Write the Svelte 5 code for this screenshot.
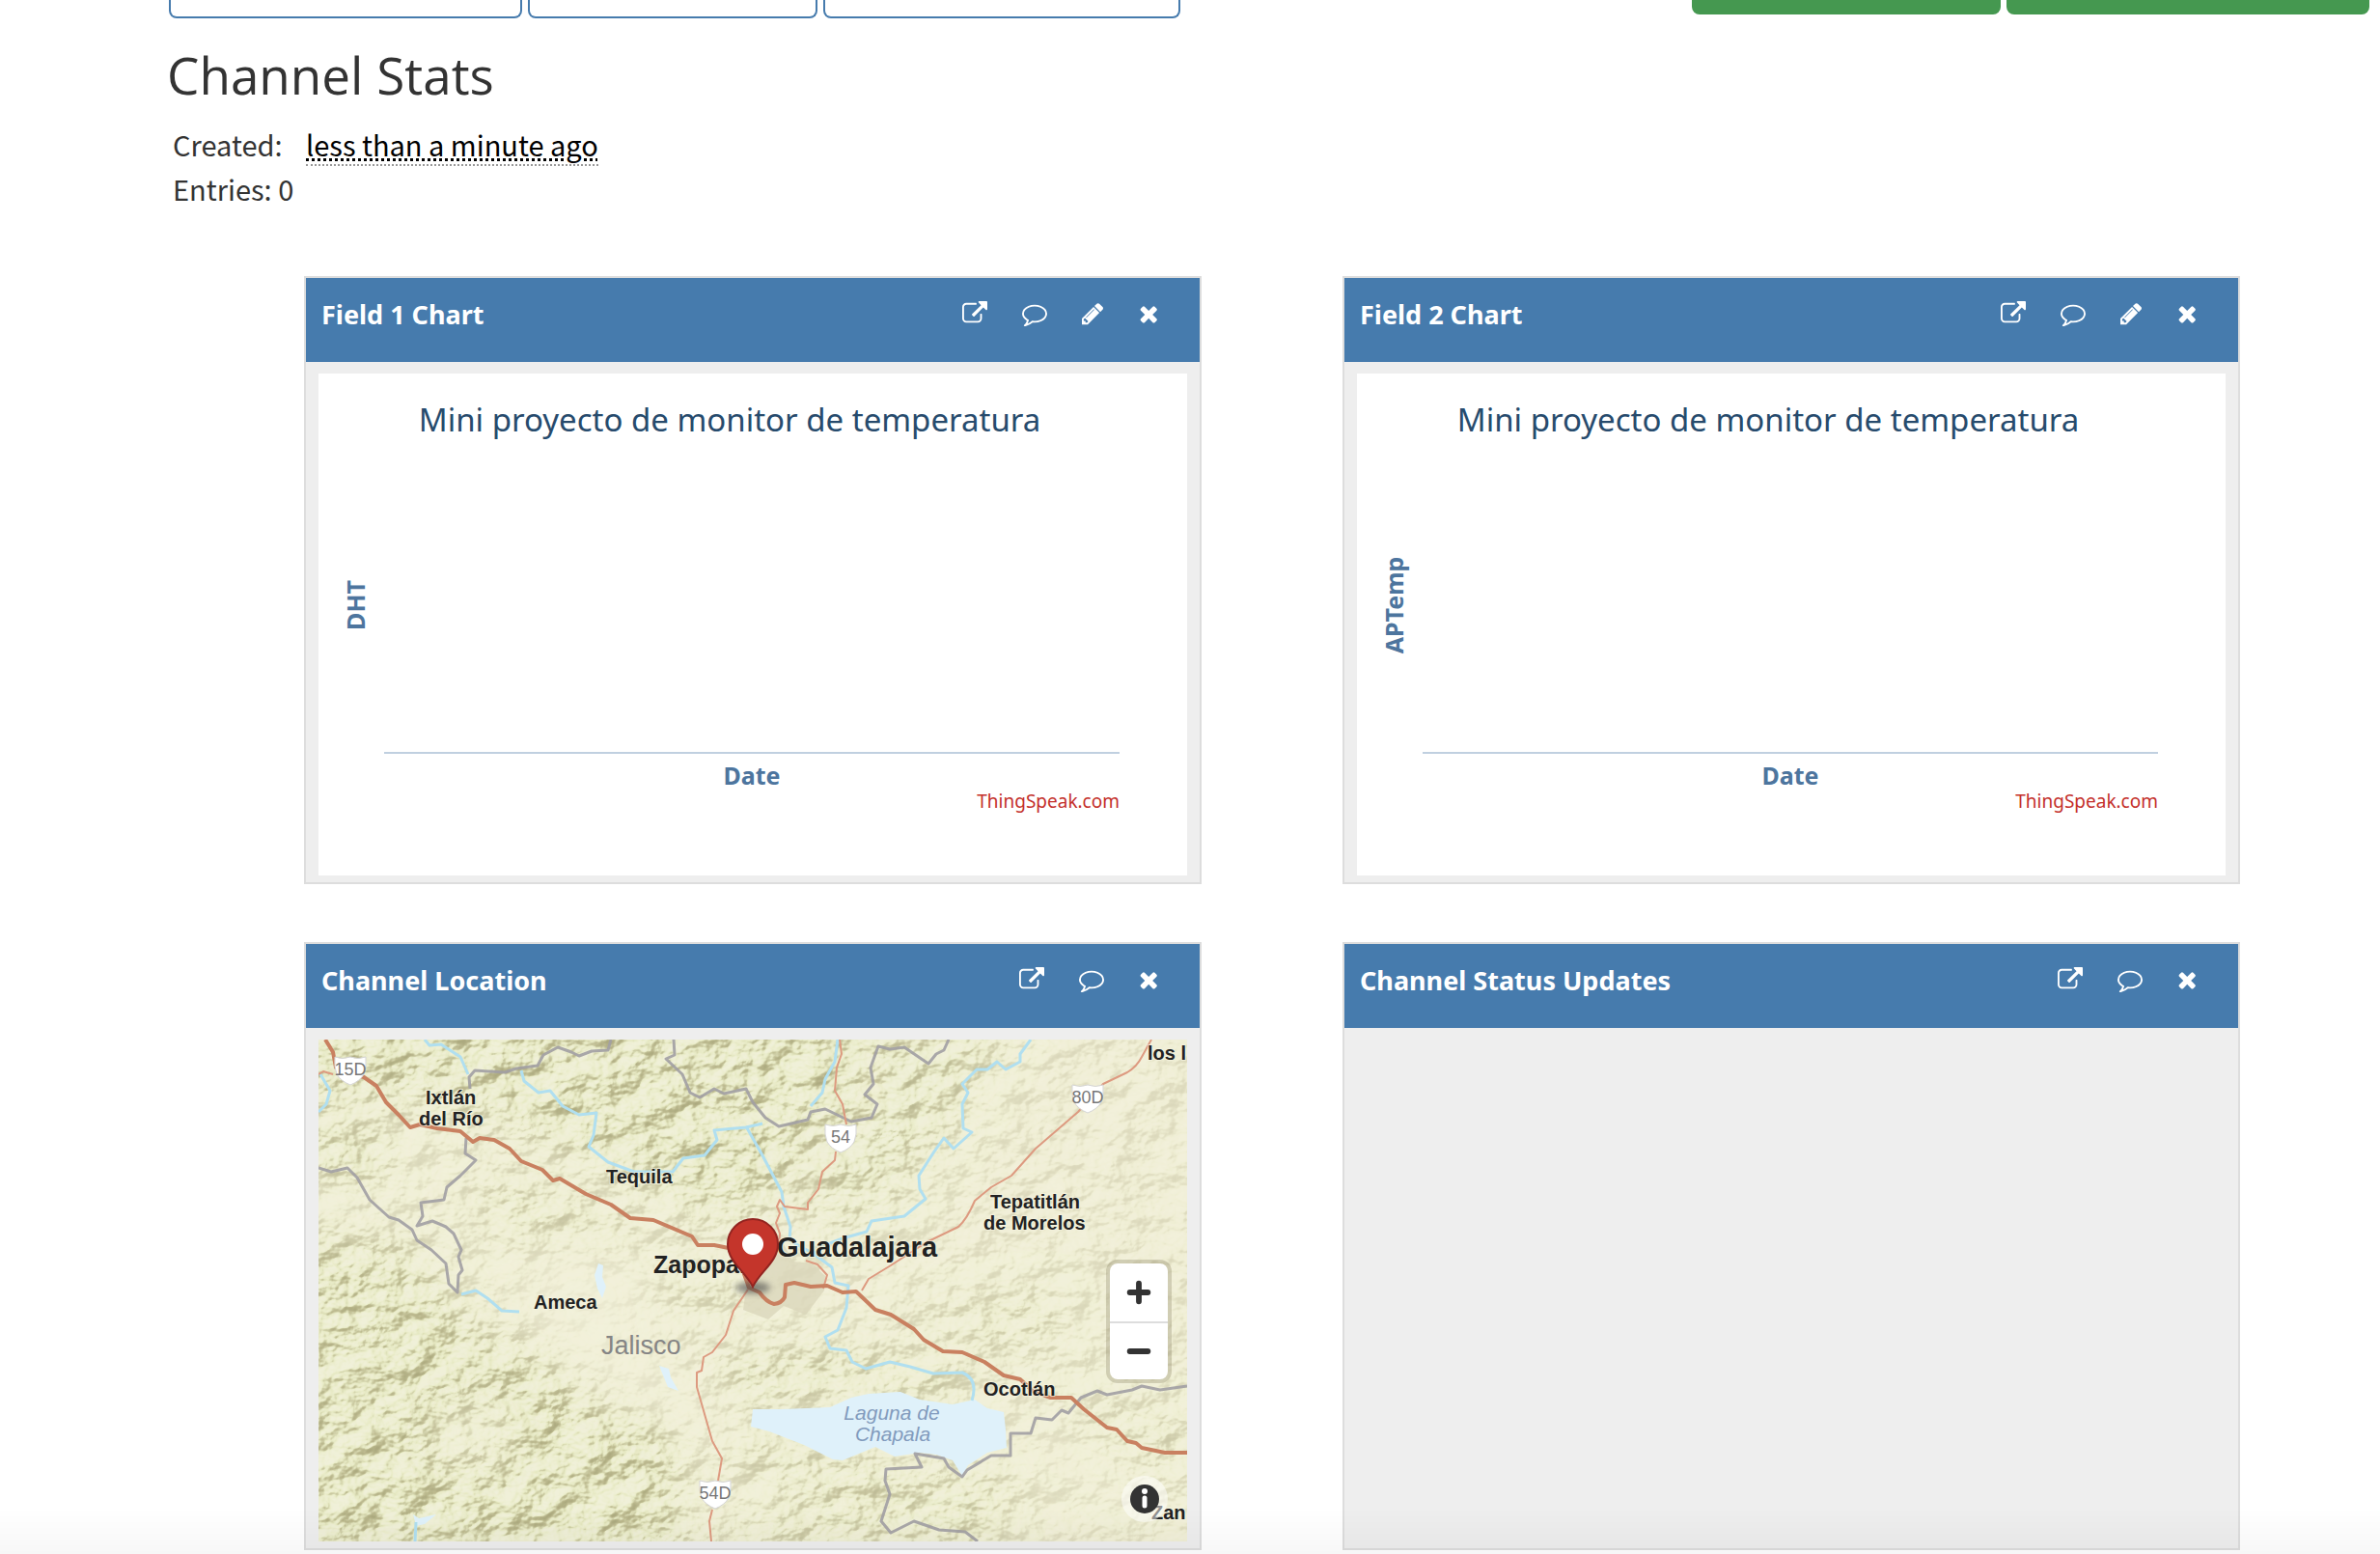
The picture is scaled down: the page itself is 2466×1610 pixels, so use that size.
<script>
  const icons = {
    open: {
      label: 'Open in new window',
      box: '0 0 1792 1792',
      path: 'M1408 928v320q0 119-84.5 203.5t-203.5 84.5h-832q-119 0-203.5-84.5t-84.5-203.5v-832q0-119 84.5-203.5t203.5-84.5h704q14 0 23 9t9 23v64q0 14-9 23t-23 9h-704q-66 0-113 47t-47 113v832q0 66 47 113t113 47h832q66 0 113-47t47-113v-320q0-14 9-23t23-9h64q14 0 23 9t9 23zm384-864v512q0 26-19 45t-45 19-45-19l-176-176-652 652q-10 10-23 10t-23-10l-114-114q-10-10-10-23t10-23l652-652-176-176q-19-19-19-45t19-45 45-19h512q26 0 45 19t19 45z'
    },
    comment: {
      label: 'Comments',
      box: '0 0 1792 1792',
      path: 'M896 384q-204 0-381.5 69.5t-282 187.5-104.5 255q0 112 71.5 213.5t201.5 175.5l87 50-27 96q-24 91-70 172 152-63 275-171l43-38 57 6q69 8 130 8 204 0 381.5-69.5t282-187.5 104.5-255-104.5-255-282-187.5-381.5-69.5zm896 512q0 174-120 321.5t-326 233-450 85.5q-70 0-145-8-198 175-460 242-49 14-114 22h-5q-15 0-27-10.5t-16-27.5v-1q-3-4-.5-12t2-10 4.5-9.5l6-9 7-8.5 8-9q7-8 31-34.5t34.5-38 31-39.5 32.5-51 27-59 26-76q-157-89-247.5-220t-90.5-281q0-174 120-321.5t326-233 450-85.5 450 85.5 326 233 120 321.5z'
    },
    edit: {
      label: 'Edit',
      box: '128 0 1536 1792',
      path: 'M491 1536l91-91-235-235-91 91v107h128v128h107zm523-928q0-22-22-22-10 0-17 7l-542 542q-7 7-7 17 0 22 22 22 10 0 17-7l542-542q7-7 7-17zm-54-192l416 416-832 832h-416v-416zm683 96q0 53-37 90l-166 166-416-416 166-165q36-38 90-38 53 0 91 38l235 234q37 39 37 91z'
    },
    close: {
      label: 'Close',
      box: '192 0 1408 1792',
      path: 'M1490 1322q0 40-28 68l-136 136q-28 28-68 28t-68-28l-294-294-294 294q-28 28-68 28t-68-28l-136-136q-28-28-28-68t28-68l294-294-294-294q-28-28-28-68t28-68l136-136q28-28 68-28t68 28l294 294 294-294q28-28 68-28t68 28l136 136q28 28 28 68t-28 68l-294 294 294 294q28 28 28 68z'
    }
  };

  const panels = [
    { title: 'Field 1 Chart', kind: 'chart', axis: 'DHT', tools: ['open', 'comment', 'edit', 'close'] },
    { title: 'Field 2 Chart', kind: 'chart', axis: 'APTemp', tools: ['open', 'comment', 'edit', 'close'] },
    { title: 'Channel Location', kind: 'map', tools: ['open', 'comment', 'close'] },
    { title: 'Channel Status Updates', kind: 'status', tools: ['open', 'comment', 'close'] }
  ];

  const shields = [
    { name: '15D', x: 33, y: 17 },
    { name: '80D', x: 797, y: 46 },
    { name: '54', x: 541, y: 87 },
    { name: '54D', x: 411, y: 456 }
  ];

  const towns = [
    { name: 'Ixtlán', x: 111, y: 67 },
    { name: 'del Río', x: 104, y: 89 },
    { name: 'Tequila', x: 298, y: 149 },
    { name: 'Ameca', x: 223, y: 279 },
    { name: 'Tepatitlán', x: 696, y: 175 },
    { name: 'de Morelos', x: 689, y: 197 },
    { name: 'Ocotlán', x: 689, y: 369 },
    { name: 'los l', x: 859, y: 21 },
    { name: 'Zan', x: 863, y: 497 }
  ];

  const borders = [
    'M0 133L13 137L30 133L40 143L53 166L73 184L83 187L97 197L102 208L117 218L132 232L135 253L144 262L145 244L149 239L145 225L148 218L140 201L132 194L118 188L102 193L108 183L106 169L130 166L133 153L147 141L163 125L152 118L153 102',
    'M157 51L156 39L162 32L193 34L205 30L227 27L233 16L248 8L262 13L270 17L283 12L300 11L303 0',
    'M368 0L369 16L360 20L377 36L385 55L395 60L410 51L420 56L443 51L450 65L463 81L477 90L507 83L510 75L525 72L552 85L573 81L579 67L566 57L575 46L572 29L580 7L592 10L607 8L632 25L640 15L648 11L653 0',
    'M900 359L872 363L853 359L843 363L817 368L807 364L790 371L777 387L770 384L760 394L743 392L738 408L717 408L717 431L697 431L672 446L667 453L653 443L648 434L618 429L625 443L588 445L587 457L592 471L583 499L593 511L617 499L643 508L670 510L683 520'
  ];

  const rivers = [
    'M110 0L115 6L127 5L147 18L155 36',
    'M210 32L213 43L228 55L240 53L253 69L270 78L288 76L285 99L280 111L300 127L327 137L367 137L378 123L400 120L413 104L410 94L443 91L460 87',
    'M443 90L460 120L480 158L482 173L489 194L488 208L513 222L532 236L535 252L549 255L547 278L538 301L525 308L530 320L547 322L553 334L567 341L592 334L613 339L637 346L667 345Q684 352 677 374',
    'M738 0L727 15L727 23L712 31L703 23L693 31L682 31L667 46L673 55L667 67L668 92L677 96L658 113L648 102L638 116L622 141L623 155L629 165L607 183L573 188L568 199L543 206L530 211L513 222',
    'M538 0L535 23L525 41L522 55L510 69',
    'M2 36L12 53L8 67L0 75',
    'M148 264L163 260L175 268L190 281L208 282',
    'M101 500L100 520'
  ];

  const roads = [
    'M863 0L853 18Q848 28 838 34L813 46L787 75L743 113L718 141L697 153L680 167Q672 186 663 194L630 210L593 234L570 248L563 260',
    'M540 0L542 15L537 29L535 53L543 67L547 88M536 116L535 125L522 137L518 155L507 169L507 176L483 173L478 166L475 173L478 180L474 190L478 201L477 214',
    'M445 259L430 281L422 306L408 324L399 329L397 343L392 345L392 360L408 416L418 434L414 457M408 487L405 499L407 520',
    'M505 229L517 233L527 244L523 258',
    'M0 36L5 33L15 36'
  ];
</script>

<main class="page">
  <nav class="actions" aria-label="Channel actions">
    <div class="group">
      <button class="outline w1" aria-label="Add visualizations"></button>
      <button class="outline w2" aria-label="Add widgets"></button>
      <button class="outline w3" aria-label="Export recent data"></button>
    </div>
    <div class="group">
      <button class="solid g1" aria-label="MATLAB analysis"></button>
      <button class="solid g2" aria-label="MATLAB visualization"></button>
    </div>
  </nav>

  <h1>Channel Stats</h1>
  <div class="stats">
    <div>Created: <span class="ago">less than a minute ago</span></div>
    <div>Entries: 0</div>
  </div>

  <div class="grid">
    {#each panels as panel}
      <section class="panel">
        <header>
          <h2>{panel.title}</h2>
          <div class="tools">
            {#each panel.tools as tool}
              <button aria-label={icons[tool].label}>
                <svg class="icon" viewBox={icons[tool].box}><path d={icons[tool].path} /></svg>
              </button>
            {/each}
          </div>
        </header>
        <div class="body">
          {#if panel.kind === 'chart'}
            <svg class="view chart" viewBox="0 0 900 520">
              <text class="chart-title" x="426" y="60">Mini proyecto de monitor de temperatura</text>
              <text class="axis" transform="translate(48 240) rotate(-90)">{panel.axis}</text>
              <path class="axis-line" d="M68 393H830" />
              <text class="axis" x="449" y="426">Date</text>
              <text class="credit" x="830" y="450">ThingSpeak.com</text>
            </svg>
          {:else if panel.kind === 'map'}
            <div class="map">
              <svg class="view" viewBox="0 0 900 520" role="img" aria-label="Map of Guadalajara">
                <defs>
                  <filter id="relief" x="0" y="0" width="100%" height="100%" color-interpolation-filters="sRGB">
                    <feTurbulence type="fractalNoise" baseFrequency="0.026 0.034" numOctaves="4" seed="8" result="n" />
                    <feColorMatrix in="n" values="0 0 0 0 0  0 0 0 0 0  0 0 0 0 0  1 0 0 0 0" result="h" />
                    <feDiffuseLighting in="h" surfaceScale="11" diffuseConstant="1" lighting-color="#fff">
                      <feDistantLight azimuth="225" elevation="50" />
                    </feDiffuseLighting>
                    <feComponentTransfer>
                      <feFuncR type="table" tableValues=".66 .69 .73 .81 .90 .925 .94" />
                      <feFuncG type="table" tableValues=".65 .68 .72 .81 .91 .93 .94" />
                      <feFuncB type="table" tableValues=".48 .51 .55 .65 .76 .81 .85" />
                    </feComponentTransfer>
                    <feGaussianBlur stdDeviation="0.7" />
                  </filter>
                  <filter id="soft" x="-20%" y="-20%" width="140%" height="140%"><feGaussianBlur stdDeviation="20" /></filter>
                  <filter id="shade" x="-50%" y="-50%" width="200%" height="200%"><feGaussianBlur stdDeviation="3" /></filter>
                  <mask id="hills" maskUnits="userSpaceOnUse" x="0" y="0" width="900" height="520">
                    <rect width="900" height="520" fill="#555" />
                    <g filter="url(#soft)" fill="#f4f4f4">
                      <path d="M-40-40H560L540 60L470 170L420 190L300 130L190 80L100 60L-40 70Z" />
                      <path d="M-40 200L100 220L160 300L240 330L290 380L370 390L380 540H-40Z" />
                      <path d="M-40 90L80 100L60 150L-40 120Z" />
                      <path d="M170 130L250 165L350 200L300 220L180 200Z" opacity=".6" />
                      <path d="M550-20H720L650 100L600 160L560 200L500 180Z" opacity=".7" />
                      <path d="M420 330L540 325L680 350L660 375L560 360L430 375Z" opacity=".9" />
                      <path d="M430 410L520 430L600 440L560 470L430 440Z" opacity=".8" />
                      <path d="M590 290L760 260L770 320L700 320Z" opacity=".5" />
                      <path d="M600 450L720 440L700 530H400L450 490Z" opacity=".6" />
                      <path d="M350 240L440 240L420 290L350 260Z" opacity=".5" />
                      <path d="M780 380L900 390V470L800 440Z" opacity=".4" />
                    </g>
                    <g filter="url(#soft)" fill="#222">
                      <path d="M230 215L330 225L345 330L420 400L400 420L320 370L210 290Z" />
                      <path d="M130 375L190 370L200 440L120 440Z" opacity=".6" />
                      <path d="M740 385L890 460L850 500L740 440Z" opacity=".6" />
                    </g>
                  </mask>
                  <clipPath id="frame"><rect width="900" height="520" /></clipPath>
                </defs>
                <g clip-path="url(#frame)">
                  <rect width="900" height="520" fill="#f3f1db" />
                  <g mask="url(#hills)"><rect width="900" height="520" filter="url(#relief)" /></g>
                  <path class="urban" d="M452 225L478 205L492 230L512 232L525 245L524 260L505 285L482 276L466 290L440 280L444 250Z" />
                  <g class="water">
                    <path d="M450 383L480 383L530 381L552 371L570 367L603 365L623 373L657 378L680 373L693 382L710 386L712 404L713 423L693 428L673 441L667 452L657 436L640 430L623 428L597 432L577 422L543 436L533 435L503 420L467 406L448 401Z" />
                    <path d="M286 244L290 232L295 234L294 246L298 256L294 268L289 258Z" />
                    <path d="M353 338L363 341L365 350L373 364L362 360Z" />
                    <path d="M98 492L104 496L122 492L110 502L101 504Z" />
                  </g>
                  {#each borders as d}<path class="border" {d} />{/each}
                  {#each rivers as d}<path class="river" {d} />{/each}
                  {#each roads as d}<path class="road" {d} />{/each}
                  <path class="highway" d="M7 0L15 13L18 29L47 39L60 48L70 65L83 78L95 91L105 88L123 92L147 95L160 106L167 102L182 104L198 113L210 126L232 135L243 146L250 144L277 160L303 171L323 185L347 187L387 204L393 213L410 213L430 217L440 240L446 257L457 262Q464 272 472 274Q480 273 483 267L484 254L493 252L510 256L527 255L543 262L557 261L577 280L593 285L617 300L627 311L647 323L667 324L690 334L710 348L727 352L740 364L758 371L780 371L793 383L817 402L827 404L838 416L847 418L853 423L877 428L900 428" />
                  {#each shields as s}
                    <g transform="translate({s.x} {s.y})">
                      <path class="shield" d="M-16 1Q-8 4 0 1Q8 4 16 1Q17 12 14 19Q10 26 0 30Q-10 26-14 19Q-17 12-16 1Z" />
                      <text class="shield-name" y="20">{s.name}</text>
                    </g>
                  {/each}
                  {#each towns as t}<text class="town" x={t.x} y={t.y}>{t.name}</text>{/each}
                  <text class="town city" x="347" y="242">Zapopan</text>
                  <text class="town capital" x="475" y="225">Guadalajara</text>
                  <text class="region" x="293" y="326">Jalisco</text>
                  <text class="lake" x="594" y="394">Laguna de</text>
                  <text class="lake" x="595" y="416">Chapala</text>
                  <ellipse cx="450" cy="257" rx="18" ry="6" fill="#444" opacity=".6" filter="url(#shade)" />
                  <path class="pin" d="M450 256C442 240 424 230 424 212A26 26 0 0 1 476 212C476 230 458 240 450 256Z" />
                  <circle cx="450" cy="212" r="11" fill="#fff" />
                </g>
              </svg>
              <div class="zoom">
                <button aria-label="Zoom in"><svg viewBox="0 0 24 24"><path d="M12 4V20M4 12H20" /></svg></button>
                <button aria-label="Zoom out"><svg viewBox="0 0 24 24"><path d="M4 12H20" /></svg></button>
              </div>
              <button class="info" aria-label="Map information">
                <svg viewBox="0 0 30 30">
                  <circle cx="15" cy="15" r="15" fill="#333" />
                  <circle cx="15" cy="7" r="3" fill="#fff" />
                  <path d="M15 14V22" stroke="#fff" stroke-width="5" stroke-linecap="round" />
                </svg>
              </button>
            </div>
          {/if}
        </div>
      </section>
    {/each}
  </div>
  <div class="fade"></div>
</main>

<style>
  :global(body) {
    background: #fff;
  }
  .page {
    padding-bottom: 4px;
    color: #333;
    font-family: 'Noto Sans CJK SC', 'Noto Sans', sans-serif;
  }
  button {
    padding: 0;
    border: 0;
    background: none;
    box-sizing: border-box;
    cursor: pointer;
  }
  .actions {
    display: flex;
    justify-content: space-between;
    height: 19px;
    padding: 0 11px 0 175px;
  }
  .group {
    display: flex;
    align-items: flex-start;
    gap: 6px;
  }
  .outline {
    height: 19px;
    border: 2px solid #467bad;
    border-top: 0;
    border-radius: 0 0 8px 8px;
    background: #fff;
  }
  .solid {
    height: 15px;
    border-radius: 0 0 8px 8px;
    background: #459850;
  }
  .w1 { width: 366px; }
  .w2 { width: 300px; }
  .w3 { width: 370px; }
  .g1 { width: 320px; }
  .g2 { width: 376px; }
  h1 {
    margin: 27px 0 0 173px;
    font: 400 53px/64px 'Open Sans', sans-serif;
  }
  .stats {
    padding: 16px 0 0 179px;
    font-size: 29px;
    line-height: 46px;
  }
  .ago {
    display: inline-block;
    margin-left: 18px;
    color: #000;
    line-height: 42px;
    border-bottom: 2px dotted #999;
    text-decoration: underline dotted #000 3px;
    text-underline-offset: 2px;
  }
  .grid {
    display: grid;
    grid-template-columns: 1fr 1fr;
    gap: 60px 146px;
    padding: 68px 145px 0 315px;
  }
  .panel {
    display: flex;
    flex-direction: column;
    border: 2px solid #ddd;
    background: #eee;
  }
  header {
    display: flex;
    justify-content: space-between;
    align-items: flex-start;
    height: 87px;
    box-sizing: border-box;
    padding: 20px 43px 0 16px;
    background: #467bad;
    color: #fff;
  }
  h2 {
    margin: 0;
    font: 700 27px/36px 'Noto Sans', sans-serif;
  }
  .tools {
    display: flex;
    gap: 36px;
    padding-top: 4px;
  }
  .tools button {
    display: flex;
  }
  .icon {
    height: 26px;
    fill: #fff;
  }
  .body {
    flex: 1;
    padding: 12px 13px 7px;
  }
  .view {
    display: block;
    width: 100%;
  }
  .chart {
    background: #fff;
    font-family: 'Noto Sans', sans-serif;
  }
  .chart-title {
    fill: #274b6d;
    font-size: 33px;
    text-anchor: middle;
  }
  .axis {
    fill: #4d759e;
    font-size: 25px;
    font-weight: 700;
    text-anchor: middle;
  }
  .axis-line {
    stroke: #c0d0e0;
    stroke-width: 2;
  }
  .credit {
    fill: #c4302b;
    font-size: 19px;
    text-anchor: end;
  }
  .map {
    position: relative;
    font-family: 'Liberation Sans', sans-serif;
  }
  .urban { fill: #dbd7bb; opacity: .8; }
  .water { fill: #dff1fa; }
  .border, .river, .road, .highway { fill: none; stroke-linejoin: round; }
  .border { stroke: #a19fa3; stroke-width: 3; opacity: .9; }
  .river { stroke: #b0dff0; stroke-width: 3; }
  .road { stroke: #dd9a80; stroke-width: 2; }
  .highway { stroke: #c98060; stroke-width: 4; }
  .shield { fill: #fff; stroke: #d5d5d5; stroke-width: 1; }
  .shield-name { fill: #777; font-size: 18px; text-anchor: middle; }
  .town {
    fill: #222;
    font-size: 20px;
    font-weight: 700;
    stroke: #f5f3e0;
    stroke-width: 2;
    stroke-opacity: .7;
    paint-order: stroke;
  }
  .city { font-size: 25px; }
  .capital { font-size: 29px; }
  .region { fill: #858585; font-size: 27px; }
  .lake { fill: #829bbd; font-size: 21px; font-style: italic; text-anchor: middle; }
  .pin { fill: #c4352b; stroke: #922420; stroke-width: 2; }
  .zoom {
    position: absolute;
    top: 228px;
    right: 16px;
    width: 60px;
    border: 4px solid rgba(110, 105, 70, .25);
    border-radius: 12px;
    background: #fff;
    background-clip: padding-box;
  }
  .zoom button {
    display: flex;
    align-items: center;
    justify-content: center;
    width: 60px;
    height: 60px;
  }
  .zoom button + button {
    border-top: 2px solid #ddd;
  }
  .zoom svg {
    width: 28px;
    stroke: #333;
    stroke-width: 5;
    stroke-linecap: round;
  }
  .info {
    position: absolute;
    right: 20px;
    bottom: 20px;
    display: flex;
    align-items: center;
    justify-content: center;
    width: 48px;
    height: 48px;
    border-radius: 24px;
    background: rgba(255, 255, 255, .5);
  }
  .info svg {
    width: 30px;
  }
  .fade {
    position: fixed;
    inset: auto 0 0;
    height: 48px;
    background: linear-gradient(transparent, rgba(0, 0, 0, .03));
    pointer-events: none;
  }
</style>
